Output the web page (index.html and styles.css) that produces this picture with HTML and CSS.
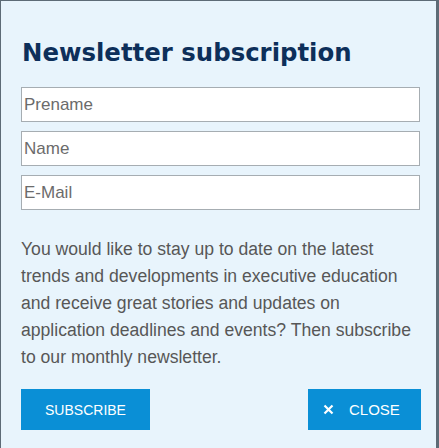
FILE: index.html
```html
<!DOCTYPE html>
<html>
<head>
<meta charset="utf-8">
<link rel="stylesheet" href="styles.css">
</head>
<body>
<div class="dialog">
  <h1 class="title">Newsletter subscription</h1>
  <form class="form">
    <input class="field" type="text" placeholder="Prename">
    <input class="field" type="text" placeholder="Name">
    <input class="field" type="text" placeholder="E-Mail">
  </form>
  <p class="text">You would like to stay up to date on the latest trends and developments in executive education and receive great stories and updates on application deadlines and events? Then subscribe to our monthly newsletter.</p>
  <div class="actions">
    <button class="btn btn-subscribe" type="button">SUBSCRIBE</button>
    <button class="btn btn-close" type="button"><svg class="x" width="11" height="11" viewBox="0 0 11 11"><path d="M1.5 1.5 L9.5 9.5 M9.5 1.5 L1.5 9.5" stroke="#fff" stroke-width="2.2" fill="none"/></svg>CLOSE</button>
  </div>
</div>
</body>
</html>
```
FILE: styles.css
```css
html, body {
  margin: 0;
  padding: 0;
  height: 100%;
}
body {
  background: #5d6b76;
}
.dialog {
  box-sizing: border-box;
  height: 448px;
  margin: 1px 3px 0 1px;
  background: #e8f4fc;
  padding: 34px 18px 0 20px;
  font-family: "Liberation Sans", Arial, sans-serif;
}
.title {
  margin: 0 0 0 1px;
  font-family: "DejaVu Sans", sans-serif;
  font-weight: bold;
  font-size: 24.4px;
  line-height: 36px;
  color: #0d2f5a;
  letter-spacing: 0;
}
.form {
  margin-top: 16px;
  display: flex;
  flex-direction: column;
  gap: 9px;
}
.field {
  box-sizing: border-box;
  width: 399px;
  height: 35px;
  margin: 0;
  border: 1px solid #a6adb2;
  background: #fff;
  padding: 0 2px;
  font-family: "Liberation Sans", Arial, sans-serif;
  font-size: 17px;
  color: #333;
  outline: none;
}
.field::placeholder {
  color: #6b6b6b;
  opacity: 1;
}
.text {
  margin: 26px 0 0 0;
  font-size: 17.6px;
  line-height: 27px;
  color: #575757;
  width: 398px;
}
.actions {
  margin-top: 18px;
  display: flex;
  justify-content: space-between;
  width: 400px;
}
.btn {
  height: 41px;
  border: none;
  background: #0a8fd6;
  color: #fff;
  font-family: "Liberation Sans", Arial, sans-serif;
  font-size: 14px;
  padding: 0;
  cursor: pointer;
  display: flex;
  align-items: center;
  justify-content: center;
}
.btn-subscribe {
  width: 129px;
}
.btn-close {
  width: 113px;
  justify-content: flex-start;
  padding-left: 15px;
  font-size: 15px;
}
.x {
  margin-right: 15px;
}
```
